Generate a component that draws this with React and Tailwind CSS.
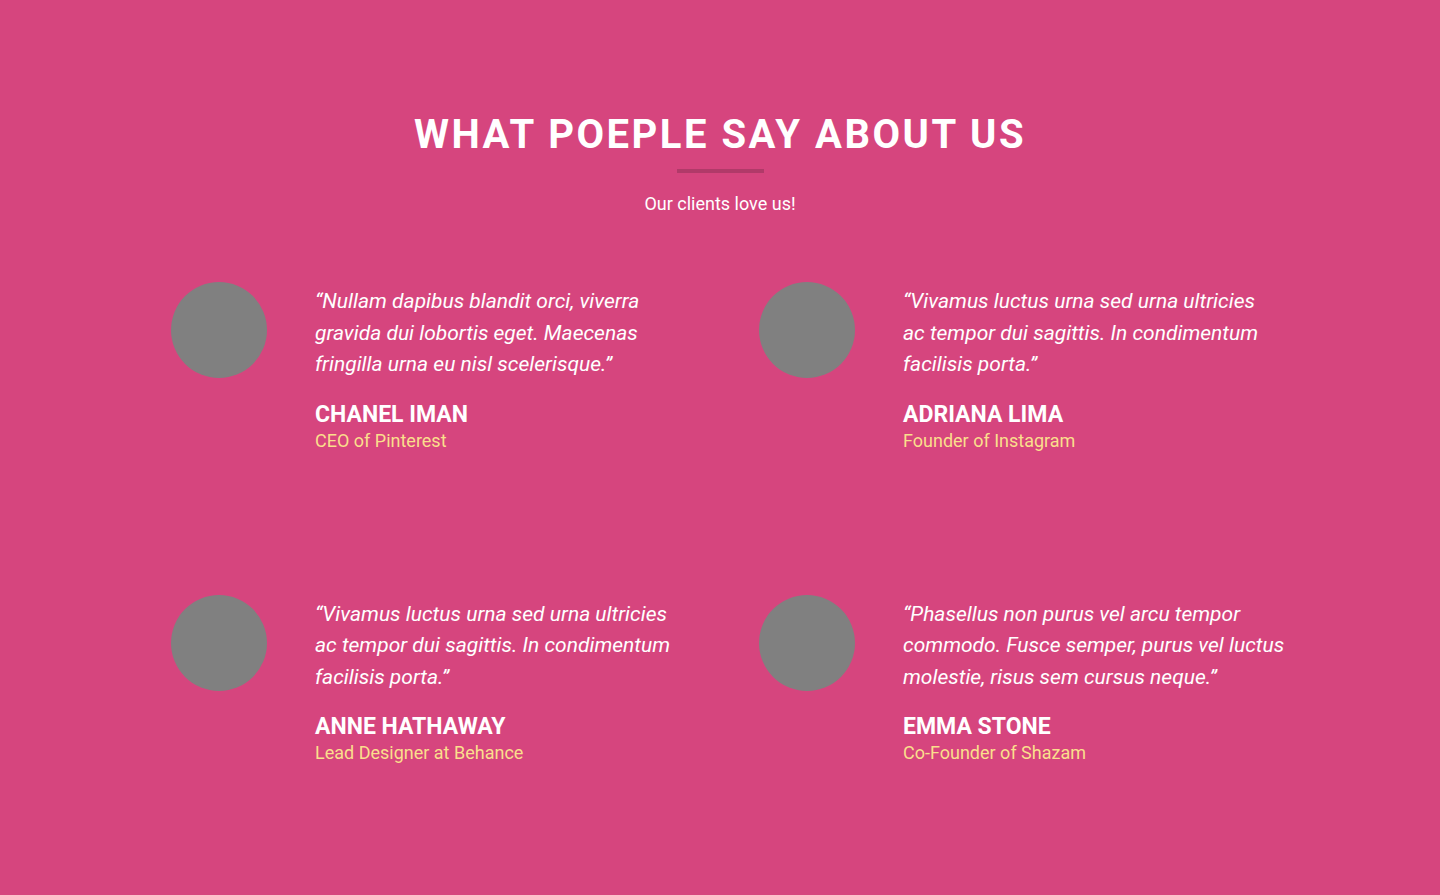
const FONT = "'Roboto', 'Noto Sans', sans-serif";

const TESTIMONIALS = [
  {
    lines: ['“Nullam dapibus blandit orci, viverra', 'gravida dui lobortis eget. Maecenas', 'fringilla urna eu nisl scelerisque.”'],
    name: 'CHANEL IMAN',
    role: 'CEO of Pinterest',
  },
  {
    lines: ['“Vivamus luctus urna sed urna ultricies', 'ac tempor dui sagittis. In condimentum', 'facilisis porta.”'],
    name: 'ADRIANA LIMA',
    role: 'Founder of Instagram',
  },
  {
    lines: ['“Vivamus luctus urna sed urna ultricies', 'ac tempor dui sagittis. In condimentum', 'facilisis porta.”'],
    name: 'ANNE HATHAWAY',
    role: 'Lead Designer at Behance',
  },
  {
    lines: ['“Phasellus non purus vel arcu tempor', 'commodo. Fusce semper, purus vel luctus', 'molestie, risus sem cursus neque.”'],
    name: 'EMMA STONE',
    role: 'Co-Founder of Shazam',
  },
];

function Testimonial({ t }) {
  return (
    <div className="flex items-start gap-[48px]">
      <div className="w-[96px] h-[96px] shrink-0 rounded-full bg-[#808080]" />
      <div className="pt-[4px]">
        <p className="italic text-[21px] leading-[31.5px] text-white whitespace-nowrap">
          {t.lines.map((l, i) => (
            <span key={i} className="block">{l}</span>
          ))}
        </p>
        <h3 className="mt-[20px] text-[23px] leading-[28px] font-bold text-white">{t.name}</h3>
        <div className="text-[18px] leading-[24px] text-[#fadf8c]">{t.role}</div>
      </div>
    </div>
  );
}

export default function App() {
  return (
    <div className="min-h-[895px] bg-[#d6457e] pt-[111px] pb-[80px]" style={{ fontFamily: FONT }}>
      <h2 className="text-center text-white font-bold text-[40px] leading-[48px] tracking-[2.5px]">
        WHAT POEPLE SAY ABOUT US
      </h2>
      <div className="mx-auto mt-[10px] w-[87px] h-[4px] bg-[#b13a69]" />
      <p className="mt-[19px] text-center text-white text-[18px] leading-[24px]">Our clients love us!</p>

      <div className="mt-[66px] pl-[171px] grid grid-cols-[588px_588px] gap-y-[142px]">
        {TESTIMONIALS.map((t) => (
          <Testimonial key={t.name} t={t} />
        ))}
      </div>
    </div>
  );
}
